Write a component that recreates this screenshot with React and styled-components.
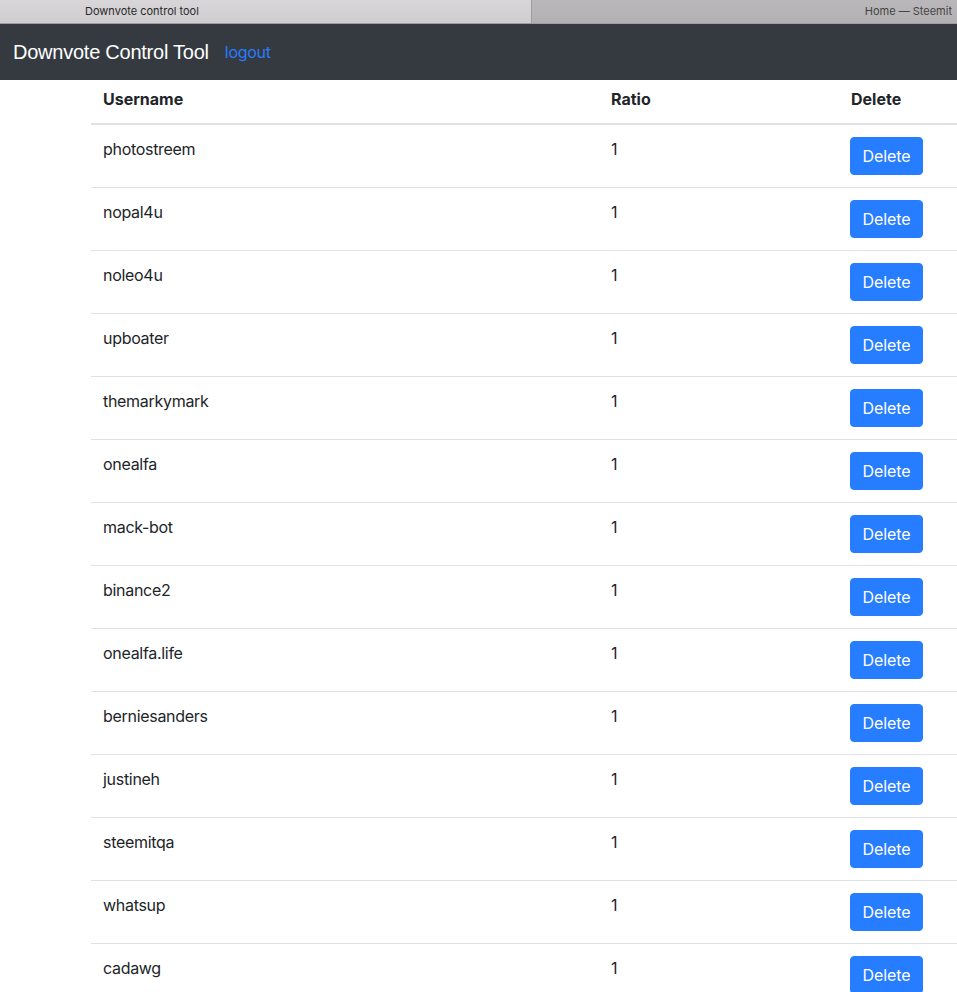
import React from 'react';
import styled, {createGlobalStyle} from 'styled-components';

const GlobalStyle = createGlobalStyle`
    html, body {
        margin: 0;
        padding: 0;
        height: 992px;
        overflow: hidden;
        background: #fff;
    }
    body {
        font-family: Inter, "Liberation Sans", Arial, sans-serif;
        font-size: 16px;
        line-height: 24px;
        color: #212529;
    }
`;

const TabBar = styled.div`
    display: flex;
    height: 24px;
    box-sizing: border-box;
    border-bottom: 1px solid #9f9e9f;
    font-size: 11px;
    line-height: 22px;
`;

const Tab = styled.div`
    box-sizing: border-box;
    color: ${props => props.active ? '#2a282b' : '#454346'};
    background: ${props => props.active ? 'linear-gradient(#d8d6d8, #cfcdcf)' : 'linear-gradient(#b9b7b9, #b3b1b3)'};
    width: ${props => props.active ? '532px' : '425px'};
    padding: ${props => props.active ? '0 0 0 85px' : '0 5px 0 0'};
    text-align: ${props => props.active ? 'left' : 'right'};
    border-right: ${props => props.active ? '1px solid #9f9e9f' : 'none'};
`;

const Navbar = styled.nav`
    display: flex;
    align-items: center;
    height: 56px;
    background: #343a40;
    padding: 0 13px;
`;

const Brand = styled.a`
    color: #fff;
    font-family: "Liberation Sans", Arial, sans-serif;
    font-size: 20px;
    letter-spacing: -0.24px;
    margin-right: 16px;
`;

const NavLink = styled.a`
    color: #277dff;
    font-size: 16px;
    letter-spacing: -0.3px;
`;

const Content = styled.div`
    padding-left: 91px;
`;

const Table = styled.table`
    width: 866px;
    table-layout: fixed;
    border-collapse: collapse;
`;

const Th = styled.th`
    box-sizing: border-box;
    width: ${props => props.width}px;
    height: 44px;
    padding: 0 12px 5px;
    text-align: left;
    font-weight: 700;
    border-bottom: 2px solid #dee2e6;
`;

const Td = styled.td`
    height: 63px;
    box-sizing: border-box;
    padding: 12px;
    vertical-align: top;
    letter-spacing: -0.3px;
    border-bottom: 1px solid #dee2e6;
`;

const DeleteButton = styled.button`
    display: block;
    height: 38px;
    width: 73px;
    padding: 0;
    font: inherit;
    letter-spacing: -0.1px;
    color: #fff;
    background: #277dff;
    border: 1px solid #277dff;
    border-radius: 4px;
    margin-left: -1px;
`;

const users = [
    'photostreem',
    'nopal4u',
    'noleo4u',
    'upboater',
    'themarkymark',
    'onealfa',
    'mack-bot',
    'binance2',
    'onealfa.life',
    'berniesanders',
    'justineh',
    'steemitqa',
    'whatsup',
    'cadawg',
];

function App() {
    return (
        <>
            <GlobalStyle />
            <TabBar>
                <Tab active>Downvote control tool</Tab>
                <Tab>Home — Steemit</Tab>
            </TabBar>
            <Navbar>
                <Brand>Downvote Control Tool</Brand>
                <NavLink>logout</NavLink>
            </Navbar>
            <Content>
                <Table>
                    <thead>
                        <tr>
                            <Th width={508}>Username</Th>
                            <Th width={240}>Ratio</Th>
                            <Th width={118}>Delete</Th>
                        </tr>
                    </thead>
                    <tbody>
                        {users.map((name) => (
                            <tr key={name}>
                                <Td>{name}</Td>
                                <Td>1</Td>
                                <Td><DeleteButton>Delete</DeleteButton></Td>
                            </tr>
                        ))}
                    </tbody>
                </Table>
            </Content>
        </>
    );
}

export default App;
